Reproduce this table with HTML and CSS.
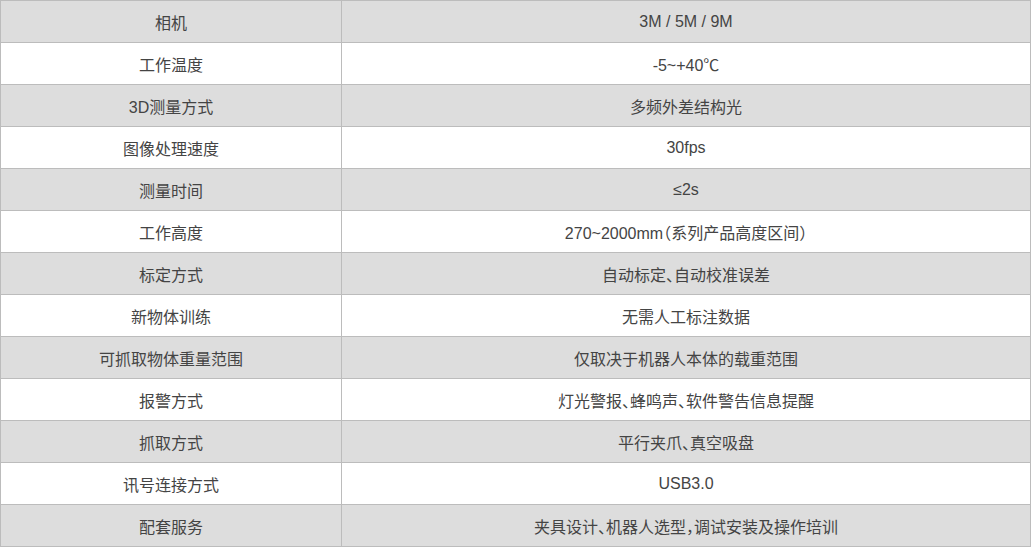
FILE: index.html
```html
<!DOCTYPE html>
<html lang="zh">
<head>
<meta charset="utf-8">
<link rel="stylesheet" href="styles.css">
</head>
<body>
<table class="spec">
<tr class="alt"><td class="k">相机</td><td class="v">3M / 5M / 9M</td></tr>
<tr><td class="k">工作温度</td><td class="v">-5~+40℃</td></tr>
<tr class="alt"><td class="k">3D测量方式</td><td class="v">多频外差结构光</td></tr>
<tr><td class="k">图像处理速度</td><td class="v">30fps</td></tr>
<tr class="alt"><td class="k">测量时间</td><td class="v">≤2s</td></tr>
<tr><td class="k">工作高度</td><td class="v">270~2000mm（系列产品高度区间）</td></tr>
<tr class="alt"><td class="k">标定方式</td><td class="v">自动标定、自动校准误差</td></tr>
<tr><td class="k">新物体训练</td><td class="v">无需人工标注数据</td></tr>
<tr class="alt"><td class="k">可抓取物体重量范围</td><td class="v">仅取决于机器人本体的载重范围</td></tr>
<tr><td class="k">报警方式</td><td class="v">灯光警报、蜂鸣声、软件警告信息提醒</td></tr>
<tr class="alt"><td class="k">抓取方式</td><td class="v">平行夹爪、真空吸盘</td></tr>
<tr><td class="k">讯号连接方式</td><td class="v">USB3.0</td></tr>
<tr class="alt"><td class="k">配套服务</td><td class="v">夹具设计、机器人选型，调试安装及操作培训</td></tr>
</table>
</body>
</html>
```
FILE: styles.css
```css
html, body {
  margin: 0;
  padding: 0;
  background: #ffffff;
}
.spec {
  width: 1031px;
  border-collapse: collapse;
  table-layout: fixed;
  font-family: "Liberation Sans", "Noto Sans CJK SC", sans-serif;
  font-size: 16px;
  color: #444444;
  font-feature-settings: "halt";
}
.spec td {
  border: 1px solid #bcbcbc;
  height: 41px;
  padding: 0;
  text-align: center;
  vertical-align: middle;
}
.spec .k {
  width: 340px;
}
.spec tr.alt td {
  background: #dddddd;
}
```
